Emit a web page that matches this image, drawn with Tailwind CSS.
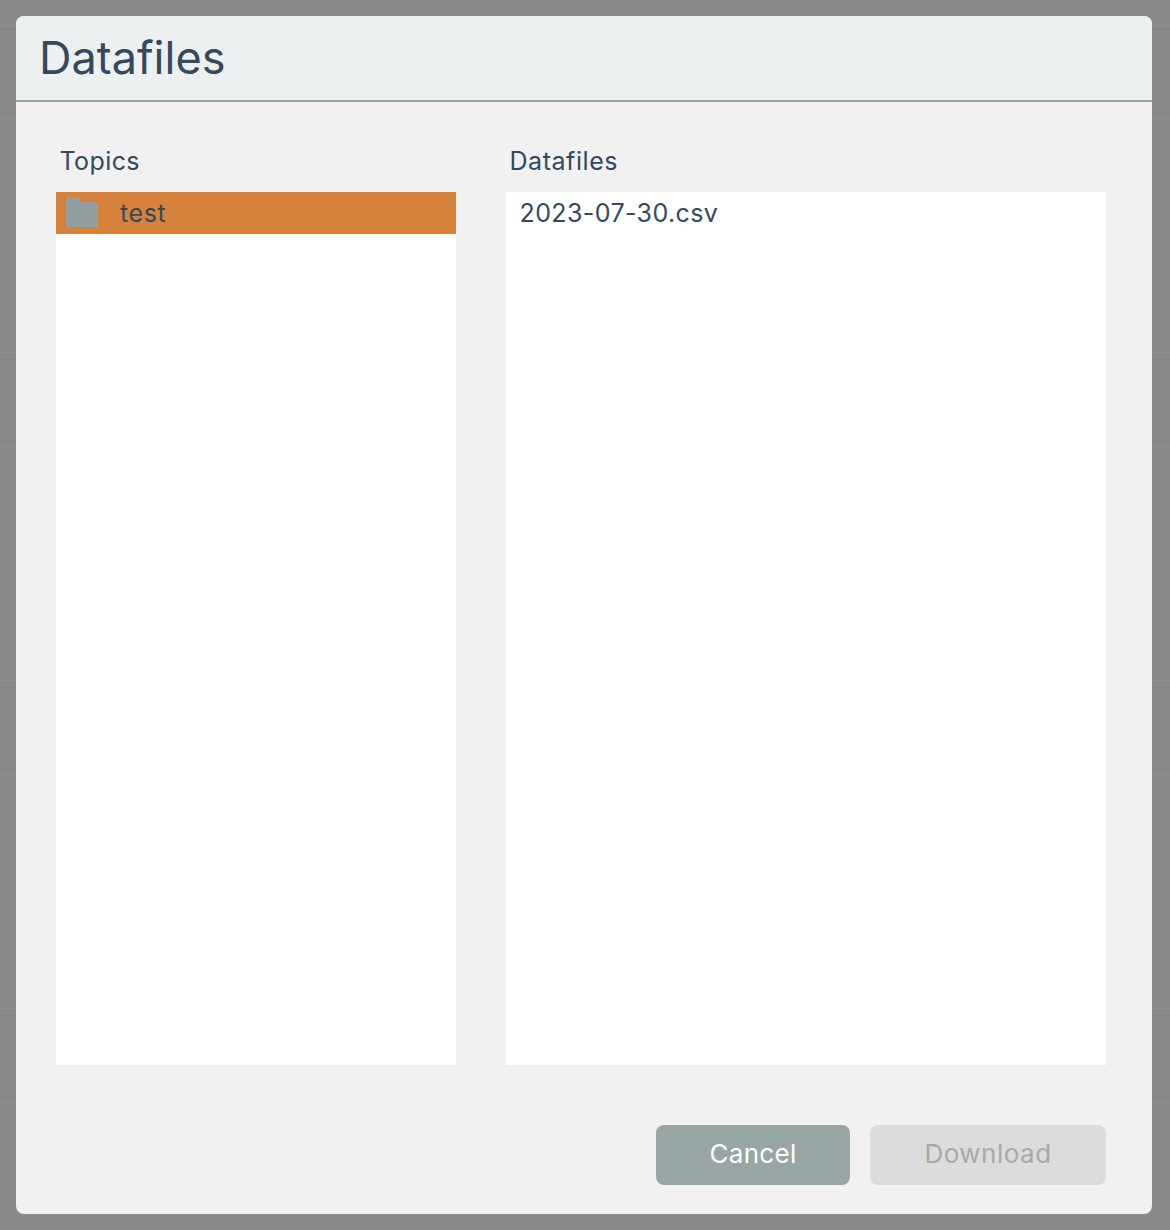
<!DOCTYPE html>
<html lang="en">
<head>
    <meta charset="UTF-8">
    <meta name="viewport" content="width=device-width, initial-scale=1.0">
    <title>Datafiles</title>
    <script src="https://cdn.jsdelivr.net/npm/@tailwindcss/browser@4"></script>
</head>
<body class="relative h-[1230px] w-[1170px] overflow-hidden bg-[#8a8a8b] font-['Inter','Lato',sans-serif] text-[#34495e]">
    <!-- rows of the page behind the overlay -->
    <div>
        <div class="h-[30px] border-b-2 border-[#848485]"></div>
        <div class="h-[84px] border-b border-[#848485]"></div>
        <div class="h-[82px] border-b border-[#848485]"></div>
        <div class="h-[82px] border-b border-[#848485]"></div>
        <div class="h-[82px] border-b border-[#848485]"></div>
        <div class="h-[82px] border-b border-[#848485]"></div>
        <div class="h-[82px] border-b border-[#848485]"></div>
        <div class="h-[82px] border-b border-[#848485]"></div>
        <div class="h-[82px] border-b border-[#848485]"></div>
        <div class="h-[82px] border-b border-[#848485]"></div>
        <div class="h-[82px] border-b border-[#848485]"></div>
        <div class="h-[82px] border-b border-[#848485]"></div>
        <div class="h-[82px] border-b border-[#848485]"></div>
        <div class="h-[82px] border-b border-[#848485]"></div>
        <div class="h-[82px] border-b border-[#848485]"></div>
    </div>

    <div class="absolute left-4 top-4 flex h-[1198px] w-[1136px] flex-col overflow-hidden rounded-lg bg-[#f1f1f1]">
        <div class="flex h-[86px] shrink-0 items-center border-b-2 border-[#98a7a5] bg-[#ecf0f1] pb-0.5 pl-[23px]">
            <h1 class="text-[45px] leading-none">Datafiles</h1>
        </div>
        <div class="flex flex-1 gap-[50px] px-10 pt-[42px]">
            <div class="w-[400px]">
                <div class="h-[48px] pl-[3.5px] text-[25px] leading-[34px] tracking-[0.4px]">Topics</div>
                <div class="h-[873px] bg-white">
                    <div class="flex h-[42px] items-center bg-[#d7823a] pl-2.5">
                        <svg class="h-[32px] w-[32px]" viewBox="0 0 32 32">
                            <path d="M2 0h10a2 2 0 0 1 2 2v3h16a2 2 0 0 1 2 2v21a2 2 0 0 1-2 2H2a2 2 0 0 1-2-2V2a2 2 0 0 1 2-2z" fill="#949fa2"/>
                        </svg>
                        <span class="ml-[22px] text-[25px] leading-none tracking-[0.6px]">test</span>
                    </div>
                </div>
            </div>
            <div class="w-[600px]">
                <div class="h-[48px] pl-[3.5px] text-[25px] leading-[34px] tracking-[0.55px]">Datafiles</div>
                <div class="h-[873px] bg-white">
                    <div class="flex h-[42px] items-center pl-[13.5px] text-[25px] leading-none tracking-[0.4px]">2023-07-30.csv</div>
                </div>
            </div>
        </div>
        <div class="flex justify-end gap-5 pb-[29px] pr-[46px]">
            <button class="h-[60px] w-[194px] rounded-lg bg-[#98a6a6] pb-1 text-[26px] tracking-[0.3px] text-white">Cancel</button>
            <button class="h-[60px] w-[236px] rounded-lg bg-[#dcdcdc] pb-1 text-[26px] tracking-[0.5px] text-[#a9a9a9]">Download</button>
        </div>
    </div>
</body>
</html>
